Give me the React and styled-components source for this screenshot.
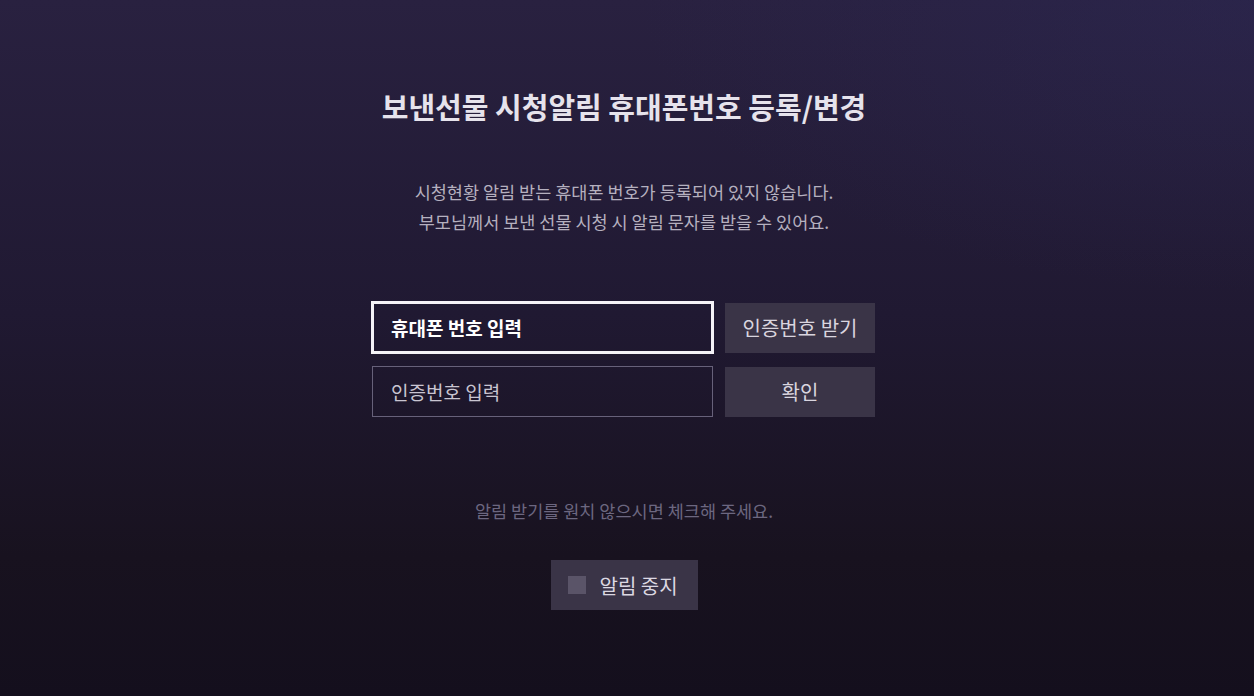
import React from "react";
import styled, { createGlobalStyle } from "styled-components";

const Global = createGlobalStyle`
  html, body { margin: 0; padding: 0; }
  body {
    font-family: "Noto Sans CJK KR", "Noto Sans", sans-serif;
    background: #1c1629;
  }
  * { box-sizing: border-box; }
`;

const Page = styled.div`
  min-height: 696px;
  height: 696px;
  overflow: hidden;
  display: flex;
  flex-direction: column;
  align-items: center;
  padding: 88px 6px 0 0;
  background:
    radial-gradient(ellipse 70% 60% at 100% 0%, rgba(45, 42, 90, 0.4), rgba(45, 42, 90, 0) 70%),
    linear-gradient(180deg, #292140 0%, #201932 45%, #18121f 80%, #140f1d 100%);
`;

const Title = styled.h1`
  margin: 0;
  font-size: 29px;
  line-height: 36px;
  font-weight: 700;
  color: #e6e3ec;
  letter-spacing: 0;
`;

const Desc = styled.p`
  margin: 53px 0 0;
  font-size: 17.5px;
  line-height: 30px;
  font-weight: 400;
  color: #b5b0bf;
  text-align: center;
`;

const Form = styled.div`
  margin: 65px 1px 0 0;
  display: grid;
  grid-template-columns: 341px 150px;
  grid-auto-rows: 51px;
  column-gap: 12px;
  row-gap: 13px;
`;

const Field = styled.input`
  width: 100%;
  height: 100%;
  margin: 0;
  padding: 0 0 0 ${(p) => (p.$focused ? 17 : 18)}px;
  font-family: inherit;
  font-size: 19px;
  background: transparent;
  outline: none;
  border: ${(p) => (p.$focused ? "2px solid #f4f2f7" : "1px solid #67617a")};
  box-shadow: ${(p) => (p.$focused ? "0 0 0 1px #f4f2f7" : "none")};
  color: #e8e5ee;
  &::placeholder {
    color: ${(p) => (p.$focused ? "#ffffff" : "#c9c5d1")};
    font-weight: ${(p) => (p.$focused ? 700 : 400)};
    opacity: 1;
  }
`;

const Button = styled.button`
  width: 100%;
  height: 50px;
  align-self: center;
  margin: 0;
  border: 0;
  padding: 0;
  background: #3a3447;
  color: #d9d5df;
  font-family: inherit;
  font-size: 20px;
  font-weight: 400;
  cursor: pointer;
`;

const Hint = styled.p`
  margin: 82px 0 0;
  font-size: 17.5px;
  line-height: 24px;
  color: #6c6780;
`;

const CheckButton = styled.button`
  margin-top: 37px;
  width: 147px;
  height: 50px;
  border: 0;
  padding: 0 0 0 17px;
  background: #3a3447;
  display: flex;
  align-items: center;
  gap: 14px;
  color: #dcd8e2;
  font-family: inherit;
  font-size: 20px;
  cursor: pointer;
`;

const Box = styled.span`
  width: 18px;
  height: 18px;
  background: #5a5468;
  flex: none;
`;

export default function App() {
  return (
    <>
      <Global />
      <Page>
        <Title>보낸선물 시청알림 휴대폰번호 등록/변경</Title>
        <Desc>
          시청현황 알림 받는 휴대폰 번호가 등록되어 있지 않습니다.
          <br />
          부모님께서 보낸 선물 시청 시 알림 문자를 받을 수 있어요.
        </Desc>
        <Form>
          <Field $focused placeholder="휴대폰 번호 입력" readOnly />
          <Button>인증번호 받기</Button>
          <Field placeholder="인증번호 입력" readOnly />
          <Button>확인</Button>
        </Form>
        <Hint>알림 받기를 원치 않으시면 체크해 주세요.</Hint>
        <CheckButton>
          <Box />
          알림 중지
        </CheckButton>
      </Page>
    </>
  );
}
